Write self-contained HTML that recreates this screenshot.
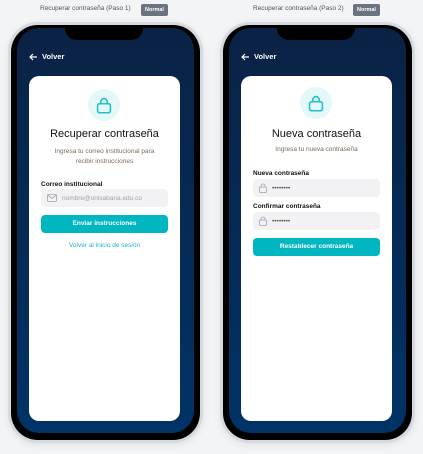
<!DOCTYPE html>
<html><head><meta charset="utf-8"><style>
*{margin:0;padding:0;box-sizing:border-box}
body{width:423px;height:454px;background:#f3f4f6;font-family:"Liberation Sans",sans-serif;position:relative;overflow:hidden}
.cap{position:absolute;top:5px;font-size:6.5px;color:#4b5563;white-space:nowrap}
.badge{position:absolute;top:4px;height:12px;background:#6b7280;color:#fff;font-size:5.5px;font-weight:bold;border-radius:2px;padding:0 4px;line-height:12px}
.outer{position:absolute;top:22px;width:195px;height:421px;background:#d6d9de;border-radius:30px;box-shadow:0 2px 8px rgba(0,0,0,.08)}
.frame{position:absolute;left:3px;top:3px;right:3px;bottom:3px;background:#000;border-radius:27px}
.screen{position:absolute;left:6px;top:3px;right:6px;bottom:7px;border-radius:22px;background:linear-gradient(#0a2244,#003366);overflow:hidden}
.notch{position:absolute;top:0;left:48px;width:78px;height:12px;background:#000;border-radius:0 0 14px 14px}
.back{position:absolute;top:24px;left:12px;color:#fff;font-size:7.5px;font-weight:bold;display:flex;align-items:center;gap:4px}
.card{position:absolute;left:12px;top:48px;right:14px;bottom:12px;background:#fff;border-radius:10px}
.circ{position:absolute;left:59px;width:32px;height:32px;border-radius:50%;background:#e4f7f9;display:flex;align-items:center;justify-content:center}
.t{position:absolute;left:0;right:0;text-align:center;font-size:11px;color:#111}
.s{position:absolute;left:0;right:0;text-align:center;font-size:6.5px;color:#7a6a5a;line-height:10px}
.lab{position:absolute;left:12px;font-size:6.5px;font-weight:bold;color:#111}
.inp{position:absolute;left:12px;right:12px;height:18px;background:#f2f2f4;border-radius:4px;display:flex;align-items:center;padding-left:6px;gap:5px;font-size:6.5px;color:#9ca3af}
.btn{position:absolute;left:12px;right:12px;height:18px;background:#00b6c1;border-radius:4px;color:#fff;font-size:6.5px;font-weight:bold;text-align:center;line-height:18px}
.lnk{position:absolute;left:0;right:0;text-align:center;font-size:6.5px;color:#22b3c4}
</style></head><body>
<div class="cap" style="left:40px">Recuperar contraseña (Paso 1)</div><div class="badge" style="left:141px">Normal</div>
<div class="cap" style="left:253px">Recuperar contraseña (Paso 2)</div><div class="badge" style="left:353px">Normal</div>

<div class="outer" style="left:8px"><div class="frame"><div class="screen">
<div class="notch"></div>
<div class="back"><svg width="9" height="8" viewBox="0 0 9 8"><path d="M8 4H1M4 1L1 4l3 3" stroke="#fff" stroke-width="1.2" fill="none"/></svg>Volver</div>
<div class="card">
<div class="circ" style="top:13px"><svg width="18" height="18" viewBox="0 0 14 14"><rect x="2" y="6" width="10" height="7" rx="1.5" fill="none" stroke="#1fbfcc" stroke-width="1.2"/><path d="M4.5 6V4.5a2.5 2.5 0 0 1 5 0V6" fill="none" stroke="#1fbfcc" stroke-width="1.2"/></svg></div>
<div class="t" style="top:52px">Recuperar contraseña</div>
<div class="s" style="top:71px">Ingresa tu correo institucional para<br>recibir instrucciones</div>
<div class="lab" style="top:105px">Correo institucional</div>
<div class="inp" style="top:113px"><svg width="10" height="8" viewBox="0 0 10 8"><rect x=".5" y=".5" width="9" height="7" rx="1" fill="none" stroke="#9ca3af" stroke-width=".8"/><path d="M.5 1l4.5 3.5L9.5 1" fill="none" stroke="#9ca3af" stroke-width=".8"/></svg>nombre@unisabana.edu.co</div>
<div class="btn" style="top:139px">Enviar instrucciones</div>
<div class="lnk" style="top:166px">Volver al inicio de sesión</div>
</div>
</div></div></div>

<div class="outer" style="left:220px"><div class="frame"><div class="screen">
<div class="notch"></div>
<div class="back"><svg width="9" height="8" viewBox="0 0 9 8"><path d="M8 4H1M4 1L1 4l3 3" stroke="#fff" stroke-width="1.2" fill="none"/></svg>Volver</div>
<div class="card">
<div class="circ" style="top:11px"><svg width="18" height="18" viewBox="0 0 14 14"><rect x="2" y="6" width="10" height="7" rx="1.5" fill="none" stroke="#1fbfcc" stroke-width="1.2"/><path d="M4.5 6V4.5a2.5 2.5 0 0 1 5 0V6" fill="none" stroke="#1fbfcc" stroke-width="1.2"/></svg></div>
<div class="t" style="top:52px">Nueva contraseña</div>
<div class="s" style="top:69px">Ingresa tu nueva contraseña</div>
<div class="lab" style="top:94px">Nueva contraseña</div>
<div class="inp" style="top:103px"><svg width="8" height="10" viewBox="0 0 8 10"><rect x=".5" y="4" width="7" height="5.5" rx="1" fill="none" stroke="#9ca3af" stroke-width=".8"/><path d="M2 4V3a2 2 0 0 1 4 0v1" fill="none" stroke="#9ca3af" stroke-width=".8"/></svg><span style="color:#555">••••••••</span></div>
<div class="lab" style="top:127px">Confirmar contraseña</div>
<div class="inp" style="top:136px"><svg width="8" height="10" viewBox="0 0 8 10"><rect x=".5" y="4" width="7" height="5.5" rx="1" fill="none" stroke="#9ca3af" stroke-width=".8"/><path d="M2 4V3a2 2 0 0 1 4 0v1" fill="none" stroke="#9ca3af" stroke-width=".8"/></svg><span style="color:#555">••••••••</span></div>
<div class="btn" style="top:162px">Restablecer contraseña</div>
</div>
</div></div></div>
</body></html>
